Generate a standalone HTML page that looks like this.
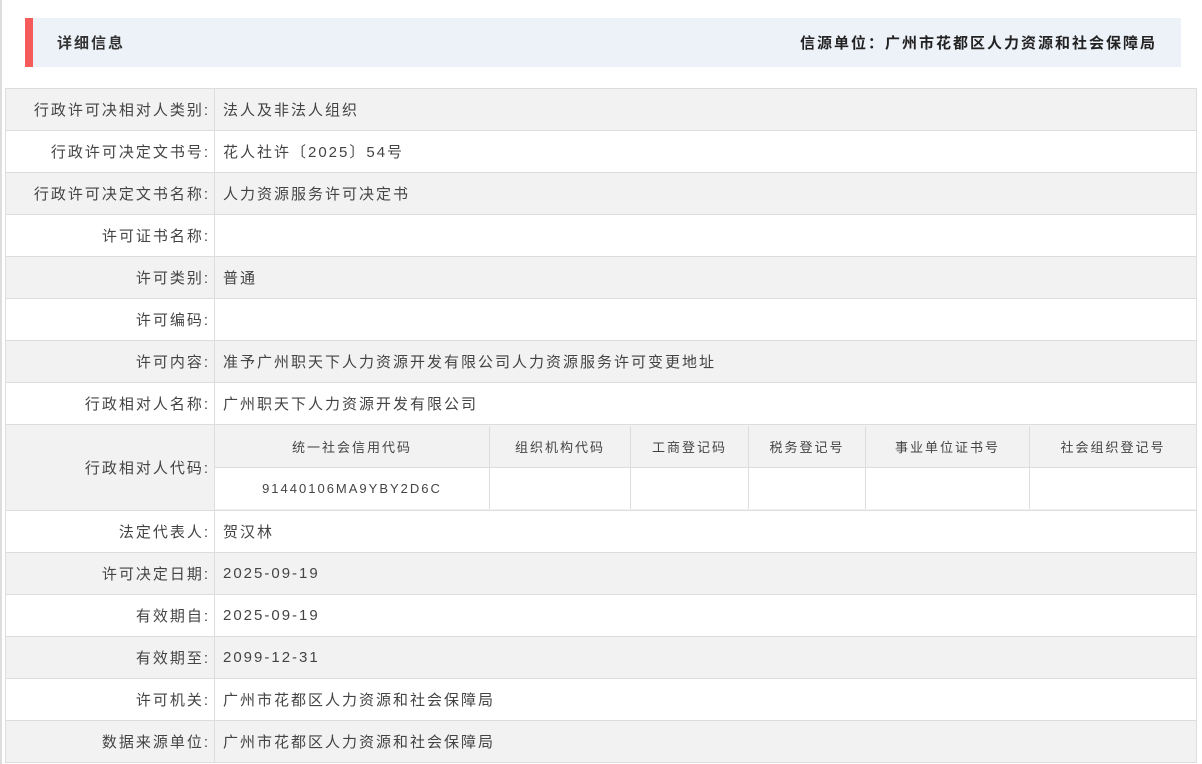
<!DOCTYPE html><html><head><meta charset="utf-8"><style>
body{margin:0;width:1202px;height:764px;background:#fff;font-family:"Liberation Sans","Noto Sans CJK SC",sans-serif;position:relative;overflow:hidden;color:#333}
.lb{position:absolute;left:0;top:0;width:2px;height:764px;background:#ddd}
.hd{position:absolute;left:25px;top:18px;width:1156px;height:49px;background:#edf2f9}
.hd .bar{position:absolute;left:0;top:0;width:8px;height:49px;background:#f65b5b}
.hd .t{position:absolute;left:32px;top:14px;font-size:15px;font-weight:bold;color:#333;letter-spacing:2px}
.hd .r{position:absolute;right:24px;top:14px;font-size:15px;font-weight:bold;color:#222;letter-spacing:2px}
table.m{position:absolute;left:5px;top:88px;width:1192px;border-collapse:collapse;font-size:15px;letter-spacing:2px}
table.m td{border:1px solid #ddd;height:41px;padding:0 8px;color:#444}
table.m td.k{width:196px;text-align:right;padding-right:4px}
table.m tr:nth-child(odd){background:#f2f2f2}
table.m tr:nth-child(even){background:#fff}
table.m td.in{padding:0}
table.i{width:100%;border-collapse:collapse;font-size:13px;background:#f2f2f2;letter-spacing:2px}
table.i td{border:1px solid #ddd;height:41px;text-align:center;padding:0;color:#444}
table.i tr:first-child td{border-top:none}
table.i tr:last-child td{border-bottom:none}
table.i td:first-child{border-left:none}
table.i td:last-child{border-right:none}
</style></head><body>
<div class="lb"></div>
<div class="hd"><div class="bar"></div><div class="t">详细信息</div><div class="r">信源单位：广州市花都区人力资源和社会保障局</div></div>
<table class="m">
<tr><td class="k">行政许可决相对人类别:</td><td>法人及非法人组织</td></tr>
<tr><td class="k">行政许可决定文书号:</td><td>花人社许〔2025〕54号</td></tr>
<tr><td class="k">行政许可决定文书名称:</td><td>人力资源服务许可决定书</td></tr>
<tr><td class="k">许可证书名称:</td><td></td></tr>
<tr><td class="k">许可类别:</td><td>普通</td></tr>
<tr><td class="k">许可编码:</td><td></td></tr>
<tr><td class="k">许可内容:</td><td>准予广州职天下人力资源开发有限公司人力资源服务许可变更地址</td></tr>
<tr><td class="k">行政相对人名称:</td><td>广州职天下人力资源开发有限公司</td></tr>
<tr><td class="k" style="height:85px">行政相对人代码:</td><td class="in"><table class="i">
<tr><td style="width:274px">统一社会信用代码</td><td style="width:140px">组织机构代码</td><td style="width:117px">工商登记码</td><td style="width:116px">税务登记号</td><td style="width:163px">事业单位证书号</td><td>社会组织登记号</td></tr>
<tr><td>91440106MA9YBY2D6C</td><td></td><td></td><td></td><td></td><td></td></tr></table></td></tr>
<tr><td class="k">法定代表人:</td><td>贺汉林</td></tr>
<tr><td class="k">许可决定日期:</td><td>2025-09-19</td></tr>
<tr><td class="k">有效期自:</td><td>2025-09-19</td></tr>
<tr><td class="k">有效期至:</td><td>2099-12-31</td></tr>
<tr><td class="k">许可机关:</td><td>广州市花都区人力资源和社会保障局</td></tr>
<tr><td class="k">数据来源单位:</td><td>广州市花都区人力资源和社会保障局</td></tr>
</table>
</body></html>
